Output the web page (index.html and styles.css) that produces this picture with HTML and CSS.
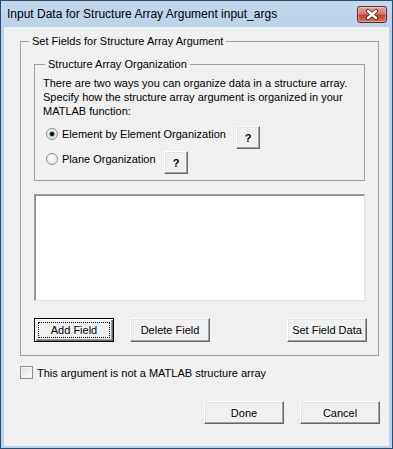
FILE: index.html
```html
<!DOCTYPE html>
<html lang="en">
<head>
    <meta charset="UTF-8">
    <meta name="viewport" content="width=device-width, initial-scale=1.0">
    <title>Input Data for Structure Array Argument input_args</title>
    <link rel="stylesheet" href="styles.css">
</head>
<body>
    <div class="window">
        <div class="titlebar">
            <span class="title">Input Data for Structure Array Argument input_args</span>
            <button class="close-btn" title="Close">
                <svg width="14" height="11" viewBox="0 0 14 11">
                    <path d="M3 2 L11 9 M11 2 L3 9" stroke="#4a2020" stroke-width="4" stroke-linecap="round"/>
                    <path d="M3 2 L11 9 M11 2 L3 9" stroke="#fff" stroke-width="2.4" stroke-linecap="round"/>
                </svg>
            </button>
        </div>

        <div class="client">
            <fieldset class="group outer-group">
                <legend>Set Fields for Structure Array Argument</legend>

                <fieldset class="group inner-group">
                    <legend>Structure Array Organization</legend>
                    <p class="hint">There are two ways you can organize data in a structure array.<br>Specify how the structure array argument is organized in your<br>MATLAB function:</p>

                    <div class="option-row">
                        <label class="radio radio-element"><span class="radio-dot checked"></span>Element by Element Organization</label>
                        <button class="btn help-btn">?</button>
                    </div>
                    <div class="option-row second">
                        <label class="radio radio-plane"><span class="radio-dot"></span>Plane Organization</label>
                        <button class="btn help-btn">?</button>
                    </div>
                </fieldset>

                <div class="listbox"></div>

                <div class="field-buttons">
                    <button class="btn default-btn"><span class="focus">Add Field</span></button>
                    <button class="btn">Delete Field</button>
                    <button class="btn set-data">Set Field Data</button>
                </div>
            </fieldset>

            <label class="check"><span class="check-box"></span>This argument is not a MATLAB structure array</label>

            <div class="dialog-buttons">
                <button class="btn dialog-btn">Done</button>
                <button class="btn dialog-btn">Cancel</button>
            </div>
        </div>
    </div>
</body>
</html>
```

FILE: styles.css
```css
* {
    box-sizing: border-box;
}
body {
    margin: 0;
    font-family: "Liberation Sans", Arial, sans-serif;
    font-size: 11px;
    color: #000;
    background: #fff;
}
.window {
    width: 393px;
    height: 449px;
    border: 1px solid #2a4a70;
    background: #b9d1ea;
    padding: 0 3px 2px;
    display: flex;
    flex-direction: column;
}
.titlebar {
    height: 26px;
    flex: none;
    display: flex;
    align-items: center;
    justify-content: space-between;
    padding-left: 3px;
    background: linear-gradient(#c4d8ee, #b9d1ea);
    margin: 0 -3px;
    padding-right: 5px;
    padding-left: 6px;
}
.title {
    font-size: 12px;
    color: #000;
}
.close-btn {
    width: 30px;
    height: 17px;
    padding: 0;
    border: 1px solid #5a2a28;
    border-radius: 3px;
    background: linear-gradient(#e9a99b, #d37a6a 45%, #c2462f 55%, #d0705c);
    box-shadow: inset 0 0 0 1px rgba(255, 255, 255, 0.35);
    display: flex;
    align-items: center;
    justify-content: center;
}
.client {
    flex: 1;
    background: #f0f0f0;
    display: flex;
    flex-direction: column;
}

/* group boxes */
.group {
    border: 1px solid #a0a0a0;
    margin: 0;
    min-width: 0;
}
.group legend {
    padding: 0 3px;
    line-height: 14px;
}
.outer-group {
    margin: 7px 10px 0 16px;
    padding: 9px 13px 13px;
}
.outer-group > legend {
    margin-left: -5px;
}
.inner-group {
    padding: 5px 8px 6px;
}
.inner-group > legend {
    margin-left: 2px;
}
.hint {
    margin: 0;
    line-height: 14px;
}
.option-row {
    display: flex;
    align-items: flex-start;
    margin-top: 8px;
}
.option-row.second {
    margin-top: 2px;
}
.radio {
    display: flex;
    align-items: center;
    gap: 4px;
    height: 16px;
    margin-left: 3px;
}
.radio-element {
    width: 190px;
}
.radio-plane {
    width: 118px;
}
.radio-dot {
    width: 12px;
    height: 12px;
    border: 1px solid #8e8f8f;
    border-radius: 50%;
    background: radial-gradient(circle at 40% 35%, #fff, #dcdcdc);
    display: flex;
    align-items: center;
    justify-content: center;
}
.radio-dot.checked::after {
    content: "";
    width: 4px;
    height: 4px;
    border-radius: 50%;
    background: #000;
    box-shadow: 0 0 1px 1px rgba(0, 0, 0, 0.35);
}

/* buttons */
.btn {
    font-family: inherit;
    font-size: 11px;
    color: #000;
    background: #f0f0f0;
    border: 1px solid;
    border-color: #fff #696969 #696969 #fff;
    box-shadow: inset -1px -1px #a0a0a0, inset 1px 1px #e3e3e3;
    padding: 0;
    width: 80px;
    height: 24px;
}
.help-btn {
    width: 24px;
    height: 23px;
    font-weight: bold;
}
.default-btn {
    border-color: #000;
    box-shadow: inset 1px 1px #fff, inset -1px -1px #696969, inset -2px -2px #a0a0a0;
    padding: 3px;
}
.focus {
    display: flex;
    align-items: center;
    justify-content: center;
    height: 100%;
    border: 1px dotted #000;
}
.listbox {
    margin-top: 13px;
    height: 107px;
    background: #fff;
    border: 1px solid;
    border-color: #a0a0a0 #e3e3e3 #e3e3e3 #a0a0a0;
    box-shadow: inset 1px 1px #8a8a8a;
}
.field-buttons {
    display: flex;
    gap: 16px;
    margin-top: 17px;
}
.set-data {
    margin-left: auto;
    margin-right: -2px;
}

/* checkbox + footer */
.check {
    display: flex;
    align-items: center;
    gap: 4px;
    margin: 10px 0 0 16px;
    height: 13px;
}
.check-box {
    width: 13px;
    height: 13px;
    border: 1px solid #8e8f8f;
    background: linear-gradient(135deg, #dcdcdc, #fff);
    box-shadow: inset 0 0 0 1px #f4f4f4;
}
.dialog-buttons {
    display: flex;
    justify-content: flex-end;
    gap: 16px;
    margin: 22px 9px 0 0;
}
.dialog-btn {
    height: 23px;
}
```
